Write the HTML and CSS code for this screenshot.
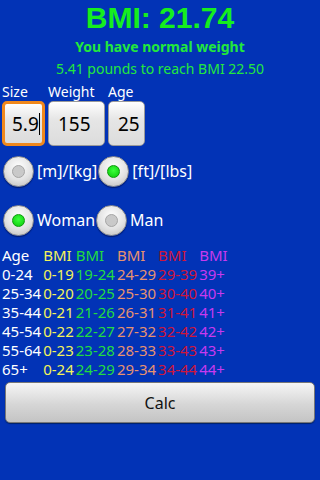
FILE: index.html
```html
<!DOCTYPE html>
<html lang="en">

<head>
  <meta charset="UTF-8">
  <meta name="viewport" content="width=device-width, initial-scale=1.0">
  <title>BMI</title>
  <link rel="stylesheet" href="styles.css">
</head>

<body>
  <div class="all">
    <div class="result">
      <div class="bmi">BMI: 21.74</div>
      <div class="status">You have normal weight</div>
      <div class="hint">5.41 pounds to reach BMI 22.50</div>
    </div>

    <div class="fields">
      <div class="field size">
        <label for="size">Size</label>
        <div class="box focused"><span>5.9</span><i class="cursor"></i></div>
      </div>
      <div class="field weight">
        <label for="weight">Weight</label>
        <div class="box"><span>155</span></div>
      </div>
      <div class="field age">
        <label for="age">Age</label>
        <div class="box"><span>25</span></div>
      </div>
    </div>

    <div class="radios units">
      <div class="radio"><span class="dot"></span>[m]/[kg]</div>
      <div class="radio checked"><span class="dot"></span>[ft]/[lbs]</div>
    </div>

    <div class="radios gender">
      <div class="radio checked"><span class="dot"></span>Woman</div>
      <div class="radio"><span class="dot"></span>Man</div>
    </div>

    <div class="table">
      <span>Age</span><span class="c1">BMI</span><span class="c2">BMI</span><span class="c3">BMI</span><span class="c4">BMI</span><span class="c5">BMI</span>
      <span>0-24</span><span class="c1">0-19</span><span class="c2">19-24</span><span class="c3">24-29</span><span class="c4">29-39</span><span class="c5">39+</span>
      <span>25-34</span><span class="c1">0-20</span><span class="c2">20-25</span><span class="c3">25-30</span><span class="c4">30-40</span><span class="c5">40+</span>
      <span>35-44</span><span class="c1">0-21</span><span class="c2">21-26</span><span class="c3">26-31</span><span class="c4">31-41</span><span class="c5">41+</span>
      <span>45-54</span><span class="c1">0-22</span><span class="c2">22-27</span><span class="c3">27-32</span><span class="c4">32-42</span><span class="c5">42+</span>
      <span>55-64</span><span class="c1">0-23</span><span class="c2">23-28</span><span class="c3">28-33</span><span class="c4">33-43</span><span class="c5">43+</span>
      <span>65+</span><span class="c1">0-24</span><span class="c2">24-29</span><span class="c3">29-34</span><span class="c4">34-44</span><span class="c5">44+</span>
    </div>

    <button class="calc">Calc</button>
  </div>
</body>

</html>
```

FILE: styles.css
```css
body {
  font-family: "Noto Sans", "Open Sans", sans-serif;
  margin: 0;
  padding: 0;
  background-color: #0233b6;
  color: white;
  width: 320px;
  height: 480px;
  overflow: hidden;
}

.result {
  text-align: center;
  color: #22e83c;
}

.bmi {
  font-family: "Liberation Sans", Arial, sans-serif;
  font-size: 30px;
  font-weight: bold;
  line-height: 35px;
  color: #16ee1e;
}

.status {
  font-size: 14px;
  font-weight: bold;
  line-height: 20px;
  margin-top: 2px;
}

.hint {
  font-size: 14px;
  line-height: 20px;
  margin-top: 2px;
}

.fields {
  display: flex;
  padding-left: 2px;
  margin-top: 4px;
}

.field {
  display: flex;
  flex-direction: column;
}

.field label {
  font-size: 14px;
  line-height: 17px;
}

.size { width: 46px; }
.weight { width: 60px; }
.age { width: 40px; }

.box {
  margin-top: 1px;
  height: 45px;
  box-sizing: border-box;
  border-radius: 5px;
  background: linear-gradient(#ffffff, #e6e6e6 40%, #dcdcdc);
  border: 1px solid #9a9a9a;
  color: black;
  font-size: 19px;
  display: flex;
  align-items: center;
  padding-left: 9px;
  margin-right: 3px;
}

.focused {
  border: 3px solid #f0881c;
  padding-left: 7px;
}

.cursor {
  display: inline-block;
  width: 1px;
  height: 22px;
  background: black;
}

.radios {
  display: flex;
  align-items: center;
  height: 38px;
  padding-left: 3px;
}

.units {
  margin-top: 6px;
}

.gender {
  margin-top: 11px;
}

.radio {
  display: flex;
  align-items: center;
  font-size: 16px;
  margin-right: 1px;
}

.dot {
  width: 31px;
  height: 31px;
  border-radius: 50%;
  box-sizing: border-box;
  background: radial-gradient(circle at 50% 35%, #ffffff, #e2e2e2 55%, #b9b9b9);
  border: 1px solid #8f8f8f;
  box-shadow: 0 1px 1px rgba(0, 0, 40, 0.5);
  display: flex;
  align-items: center;
  justify-content: center;
  margin-right: 3px;
}

.dot::after {
  content: "";
  width: 13px;
  height: 13px;
  border-radius: 50%;
  box-sizing: border-box;
  background: #c9c9c9;
  border: 1px solid #a5a5a5;
}

.checked .dot::after {
  background: radial-gradient(circle at 50% 40%, #3cff3c, #08c808);
  border-color: #0a9a0a;
}

.table {
  display: grid;
  grid-template-columns: repeat(6, auto);
  justify-content: start;
  column-gap: 2px;
  margin-top: 7px;
  padding-left: 2px;
  font-size: 15px;
  line-height: 19px;
}

.c1 { color: #f4f45a; }
.c2 { color: #22dd3e; }
.c3 { color: #e8926e; }
.c4 { color: #d0163a; }
.c5 { color: #c83aee; }

.calc {
  display: block;
  margin: 3px 5px 0;
  width: 310px;
  height: 41px;
  border: 1px solid #777;
  border-radius: 5px;
  background: linear-gradient(#f6f6f6, #d6d6d6 55%, #c4c4c4);
  font-family: "Noto Sans", sans-serif;
  font-size: 16px;
  color: #111;
  box-shadow: 0 1px 1px #002266;
}
```
